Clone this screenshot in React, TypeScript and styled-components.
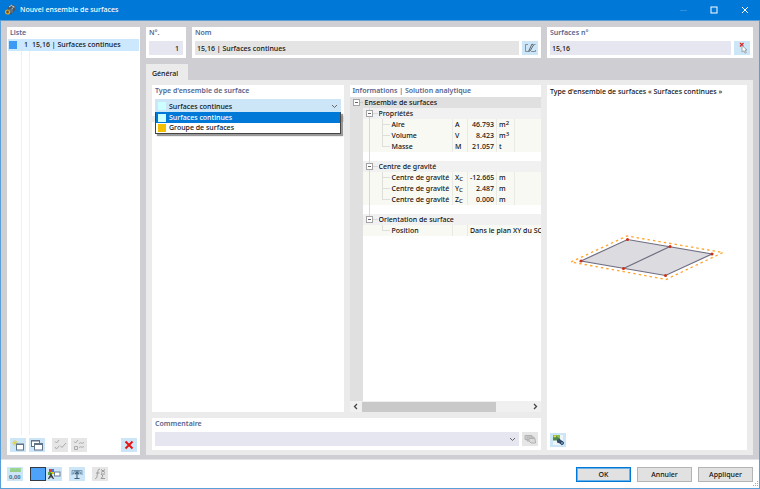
import React, { useState } from "react";
import styled, { createGlobalStyle, css } from "styled-components";

const color = {
  accent: "#0078d7",
  frame: "#5a9fd8",
  body: "#cfced3",
  panel: "#ebebeb",
  field: "#e6e6f1",
  readOnly: "#e4e4e4",
  hover: "#cce6f8",
  label: "#55658c",
  text: "#111",
};

const GlobalStyle = createGlobalStyle`
  * { box-sizing: border-box; }
  body { margin: 0; }
  body, button, input, select {
    font-family: "Noto Sans", "Open Sans", sans-serif;
    font-size: 7px;
    font-weight: 500;
    color: ${color.text};
  }
`;

const Window = styled.div`
  display: flex;
  flex-direction: column;
  min-height: 100vh;
  background: #fff;
  border: solid ${color.frame};
  border-width: 0 1px 1px;
  line-height: 10px;
`;

const TitleBar = styled.header`
  display: flex;
  align-items: center;
  height: 21px;
  padding-left: 4px;
  margin: 0 -1px;
  background: ${color.accent};
  border-bottom: 1px solid ${color.frame};
`;

const Title = styled.h1`
  flex: 1;
  margin: 0;
  padding-left: 4px;
  font-size: 7px;
  font-weight: 500;
  color: #fff;
`;

const CaptionButton = styled.button`
  display: grid;
  place-items: center;
  width: 31px;
  height: 20px;
  padding: 0;
  border: 0;
  background: none;
`;

const Content = styled.main`
  flex: 1;
  display: grid;
  grid-template-columns: 133px minmax(0, 1fr);
  gap: 6px;
  padding: 6px 6px 4px 6px;
  background: ${color.body};
`;

const Card = styled.section`
  display: flex;
  flex-direction: column;
  min-width: 0;
  background: #fff;
`;

const Heading = styled.h2`
  margin: 0;
  padding: 0 3px;
  height: 12px;
  font-size: 7px;
  line-height: 12px;
  font-weight: 600;
  color: ${color.label};
`;

const FieldLabel = styled(Heading).attrs({ as: "label" })`
  display: block;
`;

const SetList = styled.ul`
  flex: 1;
  margin: 0 1px;
  padding: 0;
  list-style: none;
  background: linear-gradient(#f0f0f0, #f0f0f0) 13px 0 / 1px 100% no-repeat,
    linear-gradient(#f0f0f0, #f0f0f0) 21px 0 / 1px 100% no-repeat;
`;

const SetItem = styled.li`
  display: grid;
  grid-template-columns: 8px 9px 1fr;
  gap: 2px;
  align-items: center;
  height: 12px;
  padding-left: 1px;
  background: #cce8ff;
  & > :nth-child(2) { text-align: right; }
  & > :nth-child(3) { padding-left: 2px; }
`;

const Swatch = styled.span<{ $color: string }>`
  width: 8px;
  height: 8px;
  flex: none;
  background: ${(p) => p.$color};
`;

const Toolbar = styled.div`
  display: flex;
  gap: 3px;
  padding: 3px;
`;

const Spacer = styled.span<{ $size?: number }>`
  ${(p) => (p.$size ? css`width: ${p.$size}px;` : css`flex: 1;`)}
`;

const IconButton = styled.button`
  display: grid;
  place-items: center;
  flex: none;
  width: 16px;
  height: 14px;
  padding: 0;
  border: 0;
  background: ${color.hover};
  &:disabled { background: #e6e6e6; }
`;

const ColorButton = styled(IconButton)`
  background: #4da3fa;
  border: 1px solid #333a44;
`;

const Details = styled.div`
  display: flex;
  flex-direction: column;
  min-width: 0;
`;

const TopRow = styled.div`
  display: grid;
  grid-template-columns: 40px minmax(0, 1fr) 206px;
  gap: 6px;
  height: 31px;
  margin-bottom: 6px;
`;

const FieldRow = styled.div`
  display: flex;
  gap: 3px;
  padding: 2px 3px 3px;
`;

const TextInput = styled.input<{ $align?: "right" }>`
  flex: 1;
  min-width: 0;
  height: 14px;
  padding: 0 4px 0 2px;
  border: 0;
  outline: 0;
  background: ${color.field};
  text-align: ${(p) => p.$align ?? "left"};
  &:read-only { background: ${color.readOnly}; }
`;

const Tab = styled.button`
  align-self: flex-start;
  height: 16px;
  width: 42px;
  padding: 2px 4px 0 6px;
  border: 0;
  background: ${color.panel};
  text-align: left;
`;

const TabPanel = styled.div`
  flex: 1;
  display: grid;
  grid-template-columns: minmax(0, 1fr) 200px;
  gap: 6px;
  padding: 5px 6px;
  background: ${color.panel};
`;

const MainColumn = styled.div`
  display: grid;
  grid-template-columns: minmax(0, 1fr) minmax(0, 1fr);
  grid-template-rows: 1fr 32px;
  gap: 6px;
`;

const TypeColumn = styled.div`
  display: grid;
  grid-template-rows: 31px 1fr;
  gap: 6px;
`;

const WideCard = styled(Card)`
  grid-column: 1 / -1;
`;

const Combo = styled.div`
  position: relative;
  display: flex;
  align-items: center;
  height: 14px;
  margin: 2px 3px 0;
  padding: 0 3px;
  gap: 3px;
  background: ${color.hover};
`;

const Select = styled.select`
  flex: 1;
  min-width: 0;
  height: 14px;
  padding: 0;
  border: 0;
  outline: 0;
  appearance: none;
  background: none;
`;

const Popup = styled.ul`
  position: absolute;
  z-index: 1;
  top: 13px;
  left: 0;
  right: 0;
  margin: 0;
  padding: 0;
  list-style: none;
  background: #fff;
  border: 1px solid #444;
  border-top-color: ${color.accent};
  box-shadow: 2px 2px 1px rgba(0, 0, 0, 0.4);
`;

const Option = styled.li<{ $active: boolean }>`
  display: flex;
  align-items: center;
  gap: 3px;
  height: 10px;
  padding: 0 2px;
  ${(p) => p.$active && css`
    background: ${color.accent};
    color: #fff;
  `}
`;

const CommentBox = styled.div`
  flex: 1;
  display: flex;
  align-items: center;
  height: 14px;
  padding-right: 3px;
  background: ${color.field};
`;

const TreeArea = styled.div`
  flex: 1;
  overflow: hidden;
  background: linear-gradient(#e0e0e0, #e0e0e0) 0 0 / 13px 100% no-repeat;
`;

const Tree = styled.table`
  width: 100%;
  table-layout: fixed;
  border-collapse: collapse;
  td, th {
    height: 11px;
    padding: 0;
    line-height: 11px;
    font-weight: 500;
    text-align: left;
    white-space: nowrap;
    overflow: hidden;
  }
  svg { display: block; }
`;

const RootRow = styled.tr`
  background: #e0e0e0;
  th { padding-left: 2px; }
`;

const GroupRow = styled.tr`
  th { background: #f1f1f1; }
`;

const LeafRow = styled.tr`
  & > :nth-child(n + 2) { background: #f9f9f4; }
  th { padding-left: 1px; }
`;

const GapRow = styled.tr`
  && td { height: 9px; }
`;

const Cell = styled.td<{ $right?: boolean }>`
  && {
    padding: 0 2px;
    border-left: 1px solid #e9e9e6;
    text-align: ${(p) => (p.$right ? "right" : "left")};
  }
  sup, sub {
    font-size: 6px;
    line-height: 0;
  }
  sup { vertical-align: 2px; }
  sub { vertical-align: -1px; }
`;

const ScrollBar = styled.div`
  display: grid;
  grid-template-columns: 12px 4fr 1fr 12px;
  height: 11px;
  align-items: center;
  justify-items: center;
  background: #f0f0f0;
`;

const Thumb = styled.span`
  width: 100%;
  height: 10px;
  background: #c9c9c9;
`;

const Caption = styled.p`
  margin: 0;
  padding: 0 3px;
  line-height: 13px;
`;

const Preview = styled.div`
  flex: 1;
  display: grid;
  place-items: center;
  padding-bottom: 14px;
`;

const Footer = styled.footer`
  display: flex;
  align-items: center;
  gap: 6px;
  height: 29px;
  padding: 0 6px;
  border-top: 1px solid #e3e3e8;
`;

const ActionButton = styled.button<{ $primary?: boolean }>`
  width: 55px;
  height: 15px;
  padding: 0;
  background: #e1e1e1;
  border: 1px solid ${(p) => (p.$primary ? color.accent : "#b4b4b4")};
  ${(p) => p.$primary && css`box-shadow: inset 0 0 0 1px #6ab0e8;`}
`;

const Grip = styled.span`
  align-self: flex-end;
  width: 6px;
  height: 6px;
  margin: 0 -6px 1px -6px;
  svg { display: block; }
`;

const Tools = styled.div`
  flex: 1;
  display: flex;
`;

const Icon = ({ w = 14, h = 12, children }: { w?: number; h?: number; children: React.ReactNode }) => (
  <svg width={w} height={h} viewBox={`0 0 ${w} ${h}`} fill="none" aria-hidden="true">
    {children}
  </svg>
);

const Chevron = () => (
  <Icon w={7} h={5}><path d="M1 1l2.500 2.500L6 1" stroke="#666" /></Icon>
);

const AppIcon = () => (
  <Icon w={12} h={12}>
    <path d="M3.500 4l4-3.500 3.500 1.500v4L7 10.500 3 9z" fill="#4a5562" />
    <path d="M5 3l3-2M8 2l2.500 1M7.500 5l2-1.500" stroke="#c3cfda" />
    <path d="M6 5v4M8 5v3.500" stroke="#8797a6" strokeWidth=".8" />
    <circle cx="3.500" cy="8" r="2" fill="#6b5a35" stroke="#e0a92c" strokeWidth="1.200" />
  </Icon>
);

const Toggle = ({ root, last }: { root?: boolean; last?: boolean }) => (
  <Icon w={root ? 13 : 16} h={11}>
    {!root && <path d={`M6.500 0v${last ? 5 : 11}M9 5.500h6`} stroke="#d8d8d8" />}
    {root && <path d="M9 5.500h4" stroke="#c8c8c8" />}
    <rect x="3.500" y="2.500" width="6" height="6" fill="#fff" stroke="#a4a4a4" />
    <path d="M5 5.500h3" stroke="#666" />
  </Icon>
);

const Branch = ({ trunk, last }: { trunk: boolean; last: boolean }) => (
  <Icon w={28} h={11}>
    {trunk && <path d="M6.500 0v11" stroke="#d8d8d8" />}
    <path d={`M19.500 0v${last ? 6 : 11}M20 5.500h7`} stroke="#dededb" />
  </Icon>
);

type Leaf = { name: string; symbol: React.ReactNode; value: string; unit: React.ReactNode };

const groups: { title: string; leaves: Leaf[] }[] = [
  {
    title: "Propriétés",
    leaves: [
      { name: "Aire", symbol: "A", value: "46.793", unit: <>m<sup>2</sup></> },
      { name: "Volume", symbol: "V", value: "8.423", unit: <>m<sup>3</sup></> },
      { name: "Masse", symbol: "M", value: "21.057", unit: "t" },
    ],
  },
  {
    title: "Centre de gravité",
    leaves: [
      { name: "Centre de gravité", symbol: <>X<sub>C</sub></>, value: "-12.665", unit: "m" },
      { name: "Centre de gravité", symbol: <>Y<sub>C</sub></>, value: "2.487", unit: "m" },
      { name: "Centre de gravité", symbol: <>Z<sub>C</sub></>, value: "0.000", unit: "m" },
    ],
  },
  {
    title: "Orientation de surface",
    leaves: [{ name: "Position", symbol: "", value: "Dans le plan XY du SC", unit: "" }],
  },
];

const InfoTree = () => (
  <Tree>
    <colgroup>
      {[13, 13, 3, 12, 62, 15, 29, 18].map((w, i) => <col key={i} width={w} />)}
      <col />
    </colgroup>
    <tbody>
      <RootRow>
        <td><Toggle root /></td>
        <th colSpan={8}>Ensemble de surfaces</th>
      </RootRow>
      {groups.map((g, gi) => {
        const lastGroup = gi === groups.length - 1;
        return (
          <React.Fragment key={g.title}>
            <GroupRow>
              <td />
              <th colSpan={2}><Toggle last={lastGroup} /></th>
              <th colSpan={6}>{g.title}</th>
            </GroupRow>
            {g.leaves.map((l, i) => (
              <LeafRow key={i}>
                <td />
                <td colSpan={3}><Branch trunk={!lastGroup} last={i === g.leaves.length - 1} /></td>
                <th>{l.name}</th>
                <Cell>{l.symbol}</Cell>
                {lastGroup ? (
                  <Cell colSpan={3}>{l.value}</Cell>
                ) : (
                  <>
                    <Cell $right>{l.value}</Cell>
                    <Cell>{l.unit}</Cell>
                    <Cell />
                  </>
                )}
              </LeafRow>
            ))}
            {!lastGroup && (
              <GapRow>
                <td />
                <td colSpan={8}><Icon w={28} h={9}><path d="M6.500 0v9" stroke="#d8d8d8" /></Icon></td>
              </GapRow>
            )}
          </React.Fragment>
        );
      })}
    </tbody>
  </Tree>
);

const SurfacesDrawing = () => (
  <svg width="160" height="50" viewBox="0 0 160 50" fill="none" role="img" aria-label="Surfaces continues">
    <path d="M4 30L60 4L156 20.500L99 47.500Z" stroke="#ffa52e" strokeWidth="1.300" strokeDasharray="2.500 3" />
    <path d="M14 29L60.500 7.500L145 22L98.500 43.500Z" fill="#dcdbe0" stroke="#6f6d80" strokeWidth="1.200" />
    <path d="M56.500 36.500L103 14.500" stroke="#6f6d80" strokeWidth="1.200" />
    {[[14, 29], [60.5, 7.5], [145, 22], [98.5, 43.5], [56.5, 36.5], [103, 14.5]].map(([x, y]) => (
      <circle key={`${x}`} cx={x} cy={y} r="1.500" fill="#d22c10" />
    ))}
  </svg>
);

const types = [
  { label: "Surfaces continues", color: "#ccffff" },
  { label: "Groupe de surfaces", color: "#f5c000" },
];

export default function App() {
  const [type, setType] = useState(0);
  const [surfaces, setSurfaces] = useState("15,16");
  const [number, setNumber] = useState("1");

  return (
    <Window>
      <GlobalStyle />
      <TitleBar>
        <AppIcon />
        <Title>Nouvel ensemble de surfaces</Title>
        <CaptionButton aria-label="Réduire" disabled>
          <Icon w={8} h={8}><path d="M1 4.500h7" stroke="#2d90e0" /></Icon>
        </CaptionButton>
        <CaptionButton aria-label="Agrandir">
          <Icon w={8} h={8}><rect x="1" y="1" width="6" height="6" stroke="#fff" /></Icon>
        </CaptionButton>
        <CaptionButton aria-label="Fermer">
          <Icon w={8} h={8}><path d="M1 1l6 6M7 1L1 7" stroke="#fff" /></Icon>
        </CaptionButton>
      </TitleBar>

      <Content>
        <Card>
          <Heading>Liste</Heading>
          <SetList>
            <SetItem>
              <Swatch $color="#3c9af5" />
              <span>1</span>
              <span>15,16 | Surfaces continues</span>
            </SetItem>
          </SetList>
          <Toolbar>
            <IconButton aria-label="Nouveau">
              <Icon>
                <path d="M4 1v6M1 4h6M2 2l4 4M6 2L2 6" stroke="#e0cc3a" strokeWidth=".8" />
                <rect x="5.500" y="5" width="7" height="6" fill="#fff" stroke="#5f7388" />
                <path d="M5 5.500h8" stroke="#5f7388" />
              </Icon>
            </IconButton>
            <IconButton aria-label="Copier">
              <Icon>
                <rect x="1.500" y="1.500" width="8" height="6" fill="#fff" stroke="#5f7388" />
                <path d="M1 2h9" stroke="#5f7388" />
                <rect x="4.500" y="4.500" width="8" height="6.500" fill="#fff" stroke="#5f7388" />
                <path d="M4 5h9" stroke="#5f7388" strokeWidth="2" />
              </Icon>
            </IconButton>
            <Spacer $size={1} />
            <IconButton aria-label="Tout cocher" disabled>
              <Icon><path d="M2 2.500l1.500 1.500L6 1M2 8l1.500 2L6 7M7 6.500L9 8.500 13 4" stroke="#aaa" /></Icon>
            </IconButton>
            <IconButton aria-label="Inverser" disabled>
              <Icon><path d="M2 2.500l1.500 1.500L6 1M2.500 7.500h3v3h-3zM7 4.500c2-2 3 1 5-1M7 8.500c2-2 3 1 5-1" stroke="#aaa" /></Icon>
            </IconButton>
            <Spacer />
            <IconButton aria-label="Supprimer">
              <Icon><path d="M3.500 2.500l7 7M10.500 2.500l-7 7" stroke="#e81414" strokeWidth="2" /></Icon>
            </IconButton>
          </Toolbar>
        </Card>

        <Details>
          <TopRow>
            <Card>
              <FieldLabel htmlFor="number">N°.</FieldLabel>
              <FieldRow>
                <TextInput id="number" $align="right" value={number} onChange={(e) => setNumber(e.target.value)} />
              </FieldRow>
            </Card>
            <Card>
              <FieldLabel htmlFor="name">Nom</FieldLabel>
              <FieldRow>
                <TextInput id="name" readOnly value={`${surfaces} | Surfaces continues`} />
                <IconButton aria-label="Modifier le nom">
                  <Icon>
                    <path d="M5 2.500H2.500v7H5M8 9.500h4.500V8M10.500 2.500h2" stroke="#82909c" />
                    <path d="M5.500 9.500L9 2l1.500 1-3.500 6z" fill="#dfe9f0" stroke="#4c5a64" strokeWidth=".9" />
                  </Icon>
                </IconButton>
              </FieldRow>
            </Card>
            <Card>
              <FieldLabel htmlFor="surfaces">Surfaces n°</FieldLabel>
              <FieldRow>
                <TextInput id="surfaces" value={surfaces} onChange={(e) => setSurfaces(e.target.value)} />
                <IconButton aria-label="Sélectionner">
                  <Icon>
                    <path d="M5 1l3.500 3.500M8.500 1L5 4.500" stroke="#e02020" strokeWidth="1.200" />
                    <path d="M7 3.500l5 4.500h-2l1.200 2.500-1.200.6L9 8.800 7 10z" fill="#fff" stroke="#8b979f" strokeWidth=".8" />
                  </Icon>
                </IconButton>
              </FieldRow>
            </Card>
          </TopRow>

          <Tab role="tab" aria-selected="true">Général</Tab>
          <TabPanel role="tabpanel">
            <MainColumn>
              <TypeColumn>
                <Card>
                  <FieldLabel htmlFor="type">Type d'ensemble de surface</FieldLabel>
                  <Combo>
                    <Swatch $color={types[type].color} />
                    <Select id="type" value={type} onChange={(e) => setType(Number(e.target.value))}>
                      {types.map((t, i) => <option key={t.label} value={i}>{t.label}</option>)}
                    </Select>
                    <Chevron />
                    <Popup role="listbox">
                      {types.map((t, i) => (
                        <Option key={t.label} role="option" aria-selected={i === type} $active={i === type} onClick={() => setType(i)}>
                          <Swatch $color={t.color} />
                          {t.label}
                        </Option>
                      ))}
                    </Popup>
                  </Combo>
                </Card>
                <Card />
              </TypeColumn>
              <Card>
                <Heading>Informations | Solution analytique</Heading>
                <TreeArea><InfoTree /></TreeArea>
                <ScrollBar>
                  <Icon w={5} h={7}><path d="M4 1L1.500 3.500 4 6" stroke="#444" strokeWidth="1.300" /></Icon>
                  <Thumb />
                  <span />
                  <Icon w={5} h={7}><path d="M1 1l2.500 2.500L1 6" stroke="#444" strokeWidth="1.300" /></Icon>
                </ScrollBar>
              </Card>
              <WideCard>
                <FieldLabel htmlFor="comment">Commentaire</FieldLabel>
                <FieldRow>
                  <CommentBox>
                    <Select id="comment"><option value="" /></Select>
                    <Chevron />
                  </CommentBox>
                  <IconButton aria-label="Bibliothèque" disabled>
                    <Icon>
                      <path d="M2 2.500h7v4H2zM4 4h7v4H4z" fill="#cfcfcf" stroke="#b2b2b2" />
                      <path d="M6 5.500h6l.500 4.500H8L6 8z" fill="#dadada" stroke="#b2b2b2" />
                    </Icon>
                  </IconButton>
                </FieldRow>
              </WideCard>
            </MainColumn>
            <Card>
              <Caption>Type d'ensemble de surfaces « Surfaces continues »</Caption>
              <Preview><SurfacesDrawing /></Preview>
              <Toolbar>
                <IconButton aria-label="Options d'affichage">
                  <Icon>
                    <path d="M2 1h10v10H2z" fill="#eef5f8" />
                    <path d="M2 1h7v5H2z" fill="#8ebf4b" />
                    <path d="M2 3.500l3-1.500 4 3v1.500H2z" fill="#4f8a45" />
                    <circle cx="4" cy="2.500" r="1" fill="#f5e04a" />
                    <path d="M6 6l2-1.500 4 3-2 2.500-4-1.500z" fill="#33516e" />
                    <circle cx="11" cy="9" r="1.500" fill="#7fa6cc" stroke="#28435e" />
                  </Icon>
                </IconButton>
              </Toolbar>
            </Card>
          </TabPanel>
        </Details>
      </Content>

      <Footer>
        <Tools>
          <IconButton aria-label="Unités et décimales">
            <Icon>
              <path d="M2 0h11v4H2z" fill="#9fd694" />
              <path d="M3 2v2M5 1v3M7 2v2M9 1v3M11 2v2" stroke="#86c47c" strokeWidth=".7" />
              <text x="1" y="11" fontSize="6" fontWeight="700" fill="#4a6580" fontFamily="Liberation Sans">0,00</text>
            </Icon>
          </IconButton>
          <Spacer $size={7} />
          <ColorButton aria-label="Couleur" />
          <IconButton aria-label="Afficher les couleurs">
            <Icon>
              <path d="M2 1h3v3H2z" fill="#e53935" /><path d="M5 1h2v3H5z" fill="#3a78d8" />
              <path d="M1 4h3v3H1z" fill="#58a842" /><path d="M4 4h3v2H4z" fill="#e8c800" />
              <path d="M4 5v2M4 6.500L1.500 11M4 6.500L6.500 11M2 9h4" stroke="#333" strokeWidth="1.200" />
              <rect x="7.500" y="4" width="5.500" height="4" fill="#fff" stroke="#6b7f94" />
            </Icon>
          </IconButton>
          <Spacer $size={7} />
          <IconButton aria-label="Vue">
            <Icon>
              <path d="M2 7V2.500h10V7" fill="#b9d2e6" stroke="#7d9db6" />
              <path d="M3 6c1-4 7-4 8 0" stroke="#5b7f9c" />
              <path d="M7 4v6M5 6l2-2 2 2M4.500 10.500h5" stroke="#3d637e" strokeWidth="1.100" />
            </Icon>
          </IconButton>
          <Spacer $size={7} />
          <IconButton aria-label="Formule" disabled>
            <Icon>
              <path d="M7 1.500C5 .5 5 3 4.500 5.500S4 11 2 10.500M3 5h3.500M8 1.500l4 3M12 1.500l-4 3M12 6H8l2 2-2 2.500h4" stroke="#9a9a9a" />
            </Icon>
          </IconButton>
        </Tools>
        <ActionButton $primary>OK</ActionButton>
        <ActionButton>Annuler</ActionButton>
        <ActionButton>Appliquer</ActionButton>
        <Grip>
          <Icon w={6} h={6}><path d="M4.500 0v1M4.500 2v1M4.500 4v1M2.500 2v1M2.500 4v1M.5 4v1" stroke="#aaa" /></Icon>
        </Grip>
      </Footer>
    </Window>
  );
}
